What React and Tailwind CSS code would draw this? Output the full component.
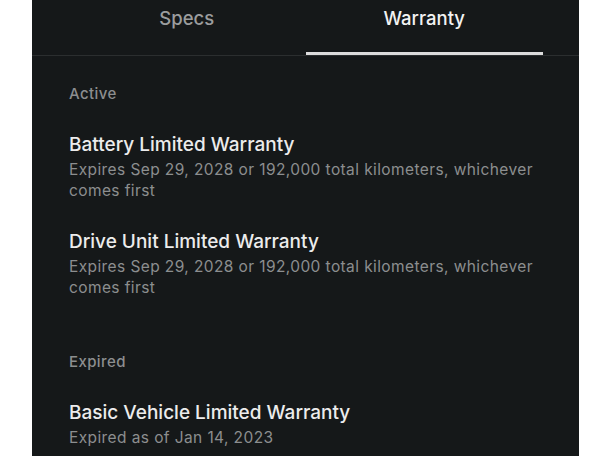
import React from "react";

const active = [
  {
    title: "Battery Limited Warranty",
    detail: "Expires Sep 29, 2028 or 192,000 total kilometers, whichever comes first",
  },
  {
    title: "Drive Unit Limited Warranty",
    detail: "Expires Sep 29, 2028 or 192,000 total kilometers, whichever comes first",
  },
];

const expired = [
  {
    title: "Basic Vehicle Limited Warranty",
    detail: "Expired as of Jan 14, 2023",
  },
];

const WarrantyItem = ({ item }) => (
  <div className="mt-[29px]">
    <h3 className="text-[19px] leading-[24px] font-medium text-[#ececec]">
      {item.title}
    </h3>
    <p className="mt-[2px] text-[15.5px] leading-[21px] tracking-[0.4px] text-[#8c8e8f]">
      {item.detail}
    </p>
  </div>
);

export default function App() {
  return (
    <div className="min-h-screen bg-white" style={{ fontFamily: "Inter, 'Noto Sans', sans-serif" }}>
      <div className="ml-[32px] w-[547px] h-[456px] overflow-hidden bg-[#151819]">
        {/* tabs */}
        <div className="border-b border-[#2b2e2f]">
          <div className="flex px-[36px]">
            {["Specs", "Warranty"].map((tab) => {
              const selected = tab === "Warranty";
              return (
                <button key={tab} className="flex-1 flex flex-col items-center h-[55px]">
                  <span
                    className={`mt-[5px] text-[18.5px] leading-[26px] font-medium ${
                      selected ? "text-[#f2f2f2]" : "text-[#9b9d9e]"
                    }`}
                  >
                    {tab}
                  </span>
                  <span
                    className={`mt-auto h-[3px] w-full ${selected ? "bg-[#dcdcdc]" : ""}`}
                  />
                </button>
              );
            })}
          </div>
        </div>

        <div className="pl-[37px] pr-[30px]">
          <p className="mt-[28px] text-[15px] leading-[20px] tracking-[0.4px] font-medium text-[#8c8e8f]">
            Active
          </p>
          {active.map((item) => (
            <WarrantyItem key={item.title} item={item} />
          ))}

          <p className="mt-[54px] text-[15px] leading-[20px] tracking-[0.4px] font-medium text-[#8c8e8f]">
            Expired
          </p>
          {expired.map((item) => (
            <WarrantyItem key={item.title} item={item} />
          ))}
        </div>
      </div>
    </div>
  );
}
